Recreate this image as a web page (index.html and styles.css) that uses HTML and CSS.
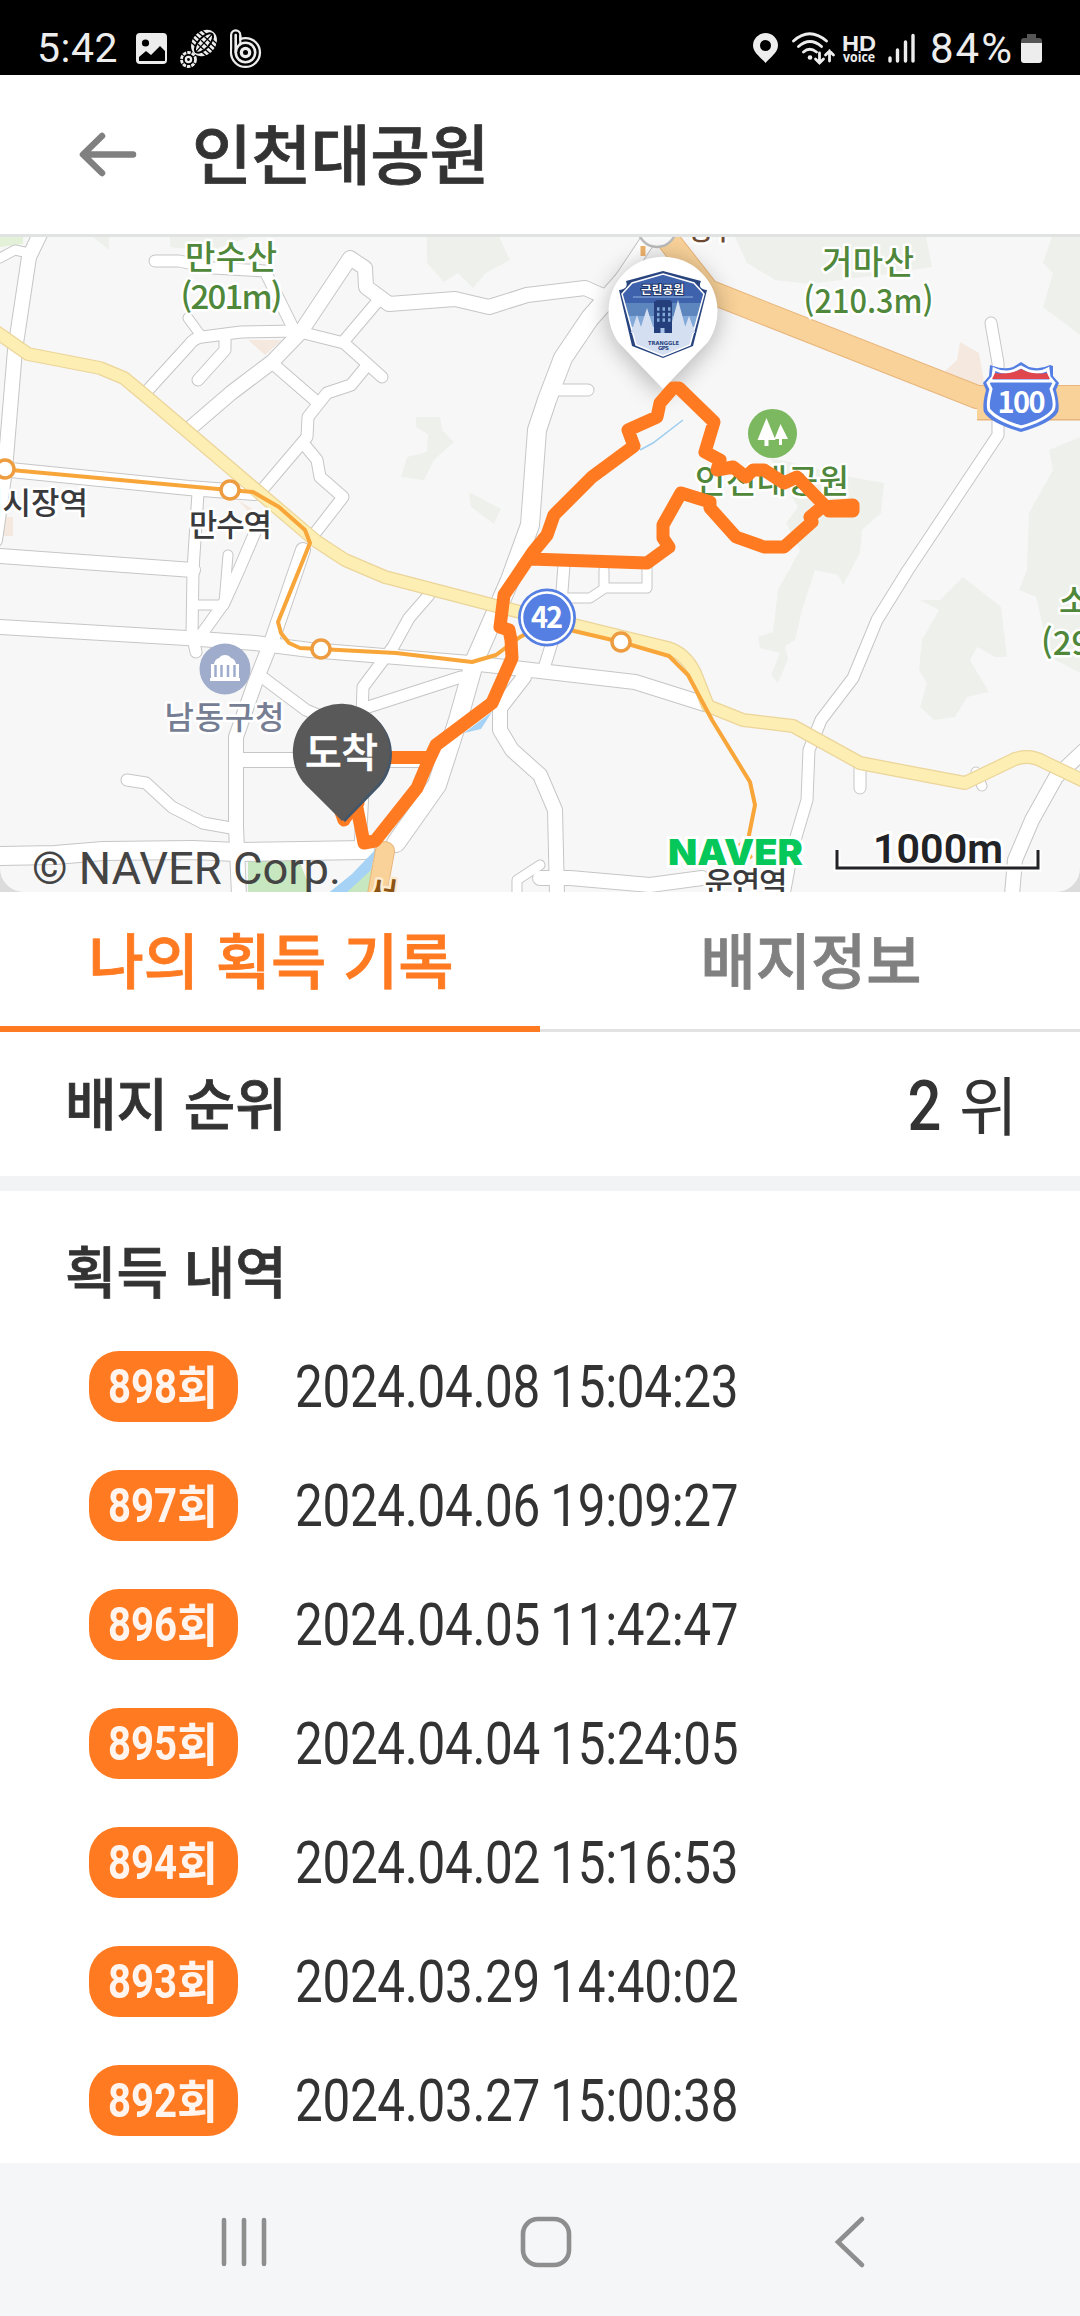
FILE: index.html
```html
<!DOCTYPE html>
<html lang="ko">
<head>
<meta charset="utf-8">
<title>인천대공원</title>
<link rel="stylesheet" href="styles.css">
</head>
<body>
<div class="app">
  <div class="status">
    <span class="clock">5:42</span>
    <svg class="notif" width="128" height="42" viewBox="134 28 128 42">
      <rect x="136" y="33" width="31" height="31" rx="4" fill="#ededed"/>
      <circle cx="145.500" cy="43" r="3.600" fill="#000"/>
      <path d="M139 61v-4l7-6 5 4 9-9 5 5v10z" fill="#000"/>
      <g transform="rotate(42 204 43)">
        <ellipse cx="204" cy="43" rx="11.500" ry="14.500" fill="#ededed"/>
        <path d="M192 35h24M192 39h24M192 43h24M192 47h24M192 51h24" stroke="#000" stroke-width="1.300"/>
        <ellipse cx="204" cy="43" rx="5.500" ry="12" fill="#ededed" stroke="#000" stroke-width="2"/>
        <path d="M204 30v26M200 38h8M200 43h8M200 48h8" stroke="#000" stroke-width="1.300"/>
      </g>
      <circle cx="188.500" cy="59.500" r="7" fill="none" stroke="#ededed" stroke-width="2.800" stroke-dasharray="3.500 1"/>
      <circle cx="188.500" cy="59.500" r="2.600" fill="none" stroke="#ededed" stroke-width="2.300"/>
      <g stroke-linecap="round">
        <path d="M235.700 35v17" stroke="#ededed" stroke-width="11.400"/><circle cx="245.500" cy="52.500" r="15.600" fill="#ededed"/>
        <path d="M235.700 35v17" stroke="#000" stroke-width="7"/><circle cx="245.500" cy="52.500" r="13.300" fill="#000"/>
        <path d="M240.300 36v8" stroke="#ededed" stroke-width="2.200"/>
        <path d="M235.700 35v17" stroke="#ededed" stroke-width="2.600"/><circle cx="245.500" cy="52.500" r="11" fill="#ededed"/>
        <circle cx="245.500" cy="52.500" r="8.400" fill="#000"/>
        <circle cx="245.500" cy="52.500" r="5.800" fill="#ededed"/><circle cx="245.500" cy="52.500" r="2.500" fill="#000"/>
      </g>
    </svg>
    <svg class="signals" width="166" height="42" viewBox="752 28 166 42">
      <path fill="#ededed" fill-rule="evenodd" d="M766.500 33a12.500 12.500 0 0 0-12.500 12.500c0 7 8 12 12.500 17.500 4.500-5.500 12.500-10.500 12.500-17.500A12.500 12.500 0 0 0 766.500 33zm0 7a5.500 5.500 0 1 1 0 11 5.500 5.500 0 0 1 0-11z"/>
      <g fill="none" stroke="#ededed" stroke-width="2.800" stroke-linecap="round">
        <path d="M794.500 41q16-14.500 33 0M799.500 46.500q11.500-10 23 0M804.500 52q6-5.500 13 0"/>
        <path d="M820.500 53v10m-4-4 4 4 4-4M830.500 61V51m-4 4 4-4 4 4"/>
      </g>
      <circle cx="811" cy="57.500" r="2.300" fill="#ededed"/>
      <text class="hd" x="843" y="51" textLength="34" lengthAdjust="spacingAndGlyphs">HD</text>
      <text class="voice" x="844" y="62" textLength="32" lengthAdjust="spacingAndGlyphs">voice</text>
      <path d="M891 58v3M898.500 50v11M906.500 42v19M914 35.500V61" stroke="#ededed" stroke-width="3.400" stroke-linecap="round"/>
    </svg>
    <span class="percent">84%</span>
    <svg width="22" height="30" viewBox="0 0 22 30"><path d="M6 0h9v4h3q3 0 3 3v3H0V7q0-3 3-3h3z" fill="#555"/><path d="M0 9h21v17q0 3-3 3H3q-3 0-3-3z" fill="#ededed"/></svg>
  </div>

  <header class="bar">
    <svg width="58" height="50" viewBox="79 130 58 50"><path d="M133 154.500H84M102 136 83 154.500 102 173" fill="none" stroke="#808080" stroke-width="6.500" stroke-linecap="round" stroke-linejoin="round"/></svg>
    <h1>인천대공원</h1>
  </header>

  <div class="map">
  <svg width="1080" height="655" viewBox="0 237 1080 655">
    <defs>
      <filter id="soft" x="-50%" y="-50%" width="200%" height="200%"><feGaussianBlur stdDeviation="12"/></filter>
      <path id="r9" d="M0 258 15 250 29 253M188 318 199 333M228 555 224 603M196 605H224M564 598H590L605 588H647V562M604 570V588M540 865 517 880V895M976 772 982 786"/>
      <path id="r11" d="M155 261 179 261 213 268 265 271 292 326M148 390 189 345Q194 338 202 337L241 332 296 331 344 343 382 377M225 337V350L198 380M377 302 344 341M272 363 317 402M365 368 351 385 327 393 308 417 307 437 262 490M303 443 317 460 320 477 343 497 312 537M262 677 306 710 330 720M365 708 461 677M127 780 146 783 172 807 203 823 231 828M560 390H588M991 323 998 363 998 435 908 570 877 620 853 678 821 720 809 750 807 800 793 847 784 895M860 765V788M564 565 560 617 545 665M198 493 193 570 192 633 196 652M256 530 238 572 224 603 196 642M429 595 409 618 393 647 363 687 362 715M363 790 360 850"/>
      <path id="r14" d="M42 230 29 257 15 350 5 470 -5 540M188 430 231 393 272 362 300 333 350 258 365 268 366 287 389 304 455 299 489 307 527 295 585 288 612 300M0 469 189 488 255 493M0 556 193 570M0 627 186 638 255 643 310 650 470 663 540 671 635 682 705 704M303 550 272 640 255 683 236 737 236 827 239 895M236 760H420M524 677 500 708V730L512 750 540 775 555 810 557 895M540 878 570 878 650 885 702 878M1090 745 1056 777 1032 820 1015 860 1012 895M648 240 608 300"/>
      <path id="r19" d="M630 273 590 318 563 358 547 400 537 430 530 525 510 580 475 660 458 720 437 785 396 843M0 856 55 855 103 851 193 850 236 852 365 850"/>
      <path id="yel" d="M-5 331 28 354 100 368 124 378 148 398 316 541 345 560 385 577 500 607 578 626 668 648Q685 653 695 673L708 706 743 720 793 726 860 763 965 783 1015 759Q1030 754 1044 762L1090 784"/>
      <path id="exp" d="M662 232 708 291 977 397H1090"/>
      <clipPath id="badgeClip"><path d="M663 274 694 283 704 294 690 345 663 356 636 345 622 294 632 283z"/></clipPath>
    </defs>
    <rect y="237" width="1080" height="655" fill="#f7f7f7"/>
    <g fill="#eef1eb">
      <path d="M427 237 427 263 444 282 458 273 473 288 486 273 510 260 499 237zM93 237l16 13v-13zM170 237v10l40 4 40-14zM416 417h24l2 13 12 12-20 18-10 20-23-3 6-20 20-5 1-18-12-7zM469 492l2 15 23 17 7-15z"/>
      <path d="M735 237 747 263 775 280 810 284 880 275 932 267 926 237zM1052 237 1043 263 1053 273 1043 307 1080 335V237z"/>
      <path d="M770 458 790 462 850 477 884 483 881 513 862 530 860 553 843 585 838 575 815 570 802 610 795 640 785 646 788 659 778 683 771 675 780 653 760 648 758 637 773 632 778 590 800 550 786 523 798 507z"/>
      <path d="M963 577 1001 607 1007 657H995L977 647 970 660 989 692 967 697 955 717 934 720 920 707 927 683 919 670 922 640 939 610 920 600H940zM1080 437 1049 450 1053 470 1029 513 1027 570 1019 590 1036 597 1050 657 1080 673z"/>
    </g>
    <path d="M943 373 957 360 960 342 979 353 985 387zM248 340H282L265 355zM0 517h13v19H2zM238 500l35 22-10 6z" fill="#f5e9df"/>
    <path d="M0 237H23V244L0 247z" fill="#e3f1d8"/>
    <path d="M248 858H298Q302 868 312 892H248zM372 864 344 892H372z" fill="#c6e7bf"/>
    <g fill="none" stroke="#c6c6c6" stroke-linejoin="round" stroke-linecap="round">
      <use href="#r9" stroke-width="11"/><use href="#r11" stroke-width="13"/><use href="#r14" stroke-width="16"/><use href="#r19" stroke-width="20"/>
    </g>
    <g fill="none" stroke="#fff" stroke-linejoin="round" stroke-linecap="round">
      <use href="#r9" stroke-width="9"/><use href="#r11" stroke-width="11"/><use href="#r14" stroke-width="14"/><use href="#r19" stroke-width="18"/>
    </g>
    <path d="M376 849 371 870 344 895H326L352 874zM492 712 481 729 464 733z" fill="#a6d3f5"/>
    <path d="M640 450 653 443 683 420" fill="none" stroke="#9dcdf0" stroke-width="1.500"/>
    <g fill="none" stroke-linejoin="round">
      <use href="#yel" stroke="#ecd59a" stroke-width="14"/><use href="#yel" stroke="#fdeeb3" stroke-width="11.500"/>
      <use href="#exp" stroke="#e8b67c" stroke-width="24"/><path d="M977 405H1090" stroke="#e8b67c" stroke-width="31"/>
      <use href="#exp" stroke="#f9d299" stroke-width="22"/><path d="M977 405H1090" stroke="#f9d299" stroke-width="28"/>
      <path d="M385 851 376 900" stroke="#e8b67c" stroke-width="20" stroke-linecap="round"/>
      <path d="M385 851 376 900" stroke="#f9d299" stroke-width="18" stroke-linecap="round"/>
      <path d="M0 469 229 490 253 492 279 507 305 530 310 543 278 622 281 633 289 643 300 648 320 649 396 653 472 662 496 655 520 637 545 624 574 631 621 642 669 656 688 675 712 720 750 782 755 805 748 840 740 845 752 858" stroke="#f8a63a" stroke-width="4"/>
    </g>
    <g fill="#fff" stroke="#ee9c40" stroke-width="3.500"><circle cx="5" cy="469" r="9"/><circle cx="230" cy="490" r="9"/><circle cx="321" cy="649" r="9"/><circle cx="621" cy="642" r="9"/></g>
    <circle cx="657" cy="228" r="19" fill="#fafafa" stroke="#bbb" stroke-width="2.500"/>
    <path d="M643 246v10" stroke="#f0b36b" stroke-width="5"/>

    <g class="label green">
      <text x="231" y="269" textLength="92">만수산</text><text x="231.500" y="309" textLength="102">(201m)</text>
      <text x="868" y="274" textLength="92">거마산</text><text x="868.500" y="313" textLength="130" lengthAdjust="spacingAndGlyphs">(210.3m)</text>
      <text x="772" y="493" textLength="154">인천대공원</text>
      <text class="from" x="1059" y="613">소래산</text><text class="from" x="1041" y="655">(299.4m)</text>
    </g>
    <circle cx="868" cy="220" r="17" fill="#7cb860"/>
    <g class="label dark">
      <text class="to" x="88" y="514" textLength="114">내시장역</text>
      <text x="230.500" y="536" textLength="83">만수역</text>
      <text x="746" y="894" textLength="83">운연역</text>
    </g>
    <text class="label brown" x="712" y="240" textLength="48">장수</text>
    <text class="label toll" x="381" y="906" transform="rotate(8 381 900)">서</text>
    <text class="label slate" x="224.500" y="729" textLength="120">남동구청</text>
    <circle cx="225" cy="669" r="25.500" fill="#9faccb"/>
    <path fill="#fff" d="M211 677V675 664h3q1-5 5-6 2-3 6-3t6 3q4 1 5 6h3v14h1v3h-30v-3h1z"/>
    <path d="M215.500 665v12M221.500 665v12M228 665v12M234.500 665v12" stroke="#9faccb" stroke-width="2.500"/>
    <circle cx="772.500" cy="433.500" r="24.500" fill="#7cb860"/>
    <path d="M766.500 418l-9 22h7v6h4v-6h7zM780.500 424l-6 15h4.500v6h3v-6h6z" fill="#fff"/>

    <path d="M1021 362 1029 367Q1040 370 1050 365L1053 366V376L1059 383 1056 390Q1060 405 1058 412 1052 423 1021 432 990 423 984 412 982 405 986 390L983 383 989 376 990 365 993 366Q1004 370 1013 367z" fill="#557fe2"/>
    <path d="M1021 367 1029 371Q1040 374 1048 369L1049 377 1054 383 1051 389Q1056 404 1053 410 1046 420 1021 427 997 420 989 410 987 404 991 389L988 383 993 377 994 369Q1004 374 1013 371z" fill="#557fe2" stroke="#fff" stroke-width="3"/>
    <path d="M995 373Q1010 375 1021 369 1032 375 1047 373L1050 379H992z" fill="#e0474c"/><path d="M990 381H1053" stroke="#fff" stroke-width="3"/>
    <text class="shield" x="1021.500" y="413" textLength="48">100</text>
    <circle cx="547" cy="617.500" r="29" fill="#557fe2"/><circle cx="547" cy="617.500" r="25" fill="none" stroke="#fff" stroke-width="2.500"/>
    <text class="shield" x="547" y="628" textLength="32">42</text>

    <path d="M663 395 618 345A55 55 0 1 1 708 345z" fill="#000" opacity=".28" filter="url(#soft)"/>
    <path class="route" d="M344 820 341 812 357 808 364 843 375 841 417 788 428 762 436 745 492 703 512 658 511 640 509 630 500 627 504 595 533 552 547 535 554 515 592 477 634 446 628 430 657 417 660 403 673 388 679 388 714 422 705 452 720 460 717 470 733 467 746 477 753 470 764 470 784 483 797 477 826 507 829 511 853 511V505L822 507 810 517 812 522 784 547 764 547 736 537 710 508V502L681 493 663 525V538L669 547 647 563 530 559"/>
    <path class="route" d="M380 757.500H428M344 819l14-16"/>
    <path d="M663 389 618 342A54.500 54.500 0 1 1 708 342z" fill="#fff"/>
    <path d="M663 271 701 281Q697 289 707 290L693 346 663 358 632 346 619 290Q629 289 626 281z" fill="#294580"/>
    <g clip-path="url(#badgeClip)">
      <rect x="619" y="271" width="88" height="34" fill="#3f62ad"/><rect x="619" y="303" width="88" height="15" fill="#5d86bf"/><rect x="619" y="316" width="88" height="12" fill="#82a9d8"/><rect x="619" y="327" width="88" height="32" fill="#d5dff2"/>
    </g>
    <path d="M663 274 694 283 704 294 690 345 663 356 636 345 622 294 632 283z" fill="none" stroke="#fff" stroke-width="1.500"/>
    <path d="M637 315l-6 18h12zM647 308l-8 25h16zM678 300l-9 33h18zM689 316l-6 17h12z" fill="#d5dff2"/>
    <path d="M654 333V302l3-2h13l2 2v31z" fill="#243f7c"/>
    <path d="M657 309h2.500m3 0h2.500m3 0h2.500M657 314.500h2.500m3 0h2.500m3 0h2.500M657 320h2.500m3 0h2.500m3 0h2.500" stroke="#82a9d8" stroke-width="3.500"/><path d="M660.500 328h4v5h-4z" fill="#a9c4e8"/>
    <path d="M633 297H693" stroke="#8db3dd" stroke-width="1"/>
    <text class="park" x="662.500" y="294" textLength="43">근린공원</text>
    <text class="gps" x="663.500" y="345" textLength="31" lengthAdjust="spacingAndGlyphs">TRANGGLE</text><text class="gps" x="663.500" y="350" textLength="11">GPS</text>

    <path d="M345 822 306 785A48.500 48.500 0 1 1 380 786z" fill="#44566a"/>
    <path d="M342 821 303 782A48.500 48.500 0 1 1 378 784z" fill="#595959"/>
    <text class="arrive" x="341.500" y="767" textLength="73">도착</text>

    <text class="copy" x="32" y="884" textLength="309" lengthAdjust="spacingAndGlyphs">© NAVER Corp.</text>
    <text class="naver" x="668" y="865" textLength="135" lengthAdjust="spacingAndGlyphs">NAVER</text>
    <path d="M837 850V868H1038V850" fill="none" stroke="#fff" stroke-width="7"/><path d="M837 850V868H1038V850" fill="none" stroke="#222326" stroke-width="3"/>
    <text class="scale" x="873" y="862.500" textLength="130" lengthAdjust="spacingAndGlyphs">1000m</text>
  </svg>
  </div>

  <nav class="tabs">
    <div class="tab active"><span>나의 획득 기록</span></div>
    <div class="tab"><span>배지정보</span></div>
  </nav>

  <section class="rank"><h2>배지 순위</h2><p><b>2</b> <span>위</span></p></section>

  <section class="history">
    <h2>획득 내역</h2>
    <ul>
      <li><span class="count"><i>898<em>회</em></i></span><time>2024.04.08 15:04:23</time></li>
      <li><span class="count"><i>897<em>회</em></i></span><time>2024.04.06 19:09:27</time></li>
      <li><span class="count"><i>896<em>회</em></i></span><time>2024.04.05 11:42:47</time></li>
      <li><span class="count"><i>895<em>회</em></i></span><time>2024.04.04 15:24:05</time></li>
      <li><span class="count"><i>894<em>회</em></i></span><time>2024.04.02 15:16:53</time></li>
      <li><span class="count"><i>893<em>회</em></i></span><time>2024.03.29 14:40:02</time></li>
      <li><span class="count"><i>892<em>회</em></i></span><time>2024.03.27 15:00:38</time></li>
    </ul>
  </section>

  <footer class="sysnav">
    <svg width="50" height="54" viewBox="0 0 50 54"><path d="M6 5V49M26 5V49M46 5V49" stroke="#8e8e8e" stroke-width="4.600" stroke-linecap="round"/></svg>
    <svg width="54" height="54" viewBox="0 0 54 54"><rect x="4" y="4" width="46" height="46" rx="15" fill="none" stroke="#8e8e8e" stroke-width="4.600"/></svg>
    <svg width="34" height="54" viewBox="0 0 34 54"><path d="M29 4 5 27 29 50" fill="none" stroke="#8e8e8e" stroke-width="4.600" stroke-linecap="round"/></svg>
  </footer>
</div>
</body>
</html>
```
FILE: styles.css
```css
* { box-sizing: border-box; margin: 0; padding: 0; }
body { background: #fff; color: #333; font-family: Roboto, "Noto Sans CJK KR", sans-serif; }
svg { display: block; flex: none; }
.app { width: 1080px; height: 2316px; display: flex; flex-direction: column; overflow: hidden; }

.status { height: 75px; background: #000; color: #ededed; display: flex; align-items: flex-start; padding: 0 37px; font-size: 41px; }
.status .notif { margin: 28px 0 0 16px; }
.status .signals { margin: 28px 13px 0 auto; }
.status > svg:last-child { margin: 34px 0 0 3px; }
.clock { width: 81px; line-height: 48px; margin-top: 24px; letter-spacing: 0.500px; white-space: nowrap; }
.percent { width: 88px; font-size: 42px; line-height: 48px; margin-top: 25px; letter-spacing: 2px; white-space: nowrap; }
.hd { font: 700 22.500px "Liberation Sans", sans-serif; fill: #ededed; }
.voice { font: 700 14.500px "Open Sans", sans-serif; fill: #ededed; }

.bar { height: 162px; border-bottom: 3px solid #e1e2e2; display: flex; align-items: center; padding-left: 79px; gap: 55px; }
h1, h2 { font-family: "Noto Sans CJK KR", sans-serif; font-weight: 500; white-space: nowrap; -webkit-text-stroke: 0.800px; }
h1 { font-size: 65px; line-height: 90px; letter-spacing: -0.400px; padding-bottom: 7px; }

.map { height: 655px; background: #dcdcdc; }
.map > svg { border-radius: 0 0 24px 24px; }
.label { font: 500 32px "Noto Sans CJK KR", sans-serif; text-anchor: middle; paint-order: stroke; stroke: #fff; stroke-width: 5px; stroke-linejoin: round; }
.green { fill: #4f873b; font-size: 33px; }
.dark { fill: #3a3a3c; font-size: 31px; }
.brown { fill: #6e4a35; font-size: 28px; }
.toll { fill: #8c5412; font-size: 34px; stroke: #fdebd0; }
.slate { fill: #767e94; }
.from { text-anchor: start; }
.to { text-anchor: end; }
.shield { font: 700 29px "Noto Sans CJK KR", sans-serif; fill: #fff; text-anchor: middle; }
.park { font: 700 11.500px "Noto Sans CJK KR", sans-serif; fill: #fff; text-anchor: middle; paint-order: stroke; stroke: #1f3466; stroke-width: 2px; }
.gps { font: 700 5.500px "DejaVu Sans", sans-serif; fill: #294580; text-anchor: middle; }
.arrive { font: 500 40px "Noto Sans CJK KR", sans-serif; fill: #fff; stroke: #fff; stroke-width: 0.600px; text-anchor: middle; }
.route { fill: none; stroke: #ff7a21; stroke-width: 13px; stroke-linejoin: round; stroke-linecap: round; }
.copy { font: 400 45px Roboto, sans-serif; fill: #444; }
.naver { font: 900 36px Inter, sans-serif; fill: #06c75a; paint-order: stroke; stroke: #fff; stroke-width: 6px; }
.scale { font: 600 40px Roboto, sans-serif; fill: #222326; paint-order: stroke; stroke: #fff; stroke-width: 6px; }

.tabs { height: 140px; display: flex; font: 500 60px/90px "Noto Sans CJK KR", sans-serif; }
.tab { flex: 1; display: flex; justify-content: center; padding: 21px 0 0 2px; color: #808080; border-bottom: 3px solid #e2e2e2; white-space: nowrap; -webkit-text-stroke: 0.800px; }
.tab.active { color: #ff7a21; border-bottom: 6px solid #ff7a21; }

.rank { height: 159px; border-bottom: 15px solid #f1f3f5; display: flex; justify-content: space-between; align-items: center; padding: 0 62px 0 65px; }
h2 { font-size: 56px; line-height: 80px; padding-bottom: 6px; }
.rank p { font: 400 64px/90px "Noto Sans CJK KR", sans-serif; white-space: nowrap; }
.rank b { font: 500 71px/90px Roboto, sans-serif; display: inline-block; transform: scaleX(.84); transform-origin: right; }

.history { flex: 1; padding: 38px 65px 0; }
.history ul { list-style: none; padding: 36px 0 0 24px; display: flex; flex-direction: column; gap: 48px; }
.history li { height: 71px; display: flex; align-items: center; gap: 57px; }
.count { width: 149px; height: 71px; border-radius: 30px; background: #ff7a21; color: #fff5ee; padding-left: 19px; }
.count i { display: flex; align-items: center; height: 71px; font: 700 49px/71px Roboto, sans-serif; transform: scaleX(.82); transform-origin: left; }
.count em { font: 700 46px/71px "Noto Sans CJK KR", sans-serif; margin-top: -5px; transform: scaleX(1.180); transform-origin: left; }
time { font: 400 59px/71px Roboto, sans-serif; white-space: nowrap; word-spacing: -2px; letter-spacing: -0.400px; transform: scaleX(.838); transform-origin: left; }

.sysnav { height: 153px; background: #f5f6f8; display: flex; align-items: center; padding: 4px 0 0 218px; }
.sysnav svg:nth-child(2) { margin-left: 251px; }
.sysnav svg:nth-child(3) { margin-left: 260px; }
```
